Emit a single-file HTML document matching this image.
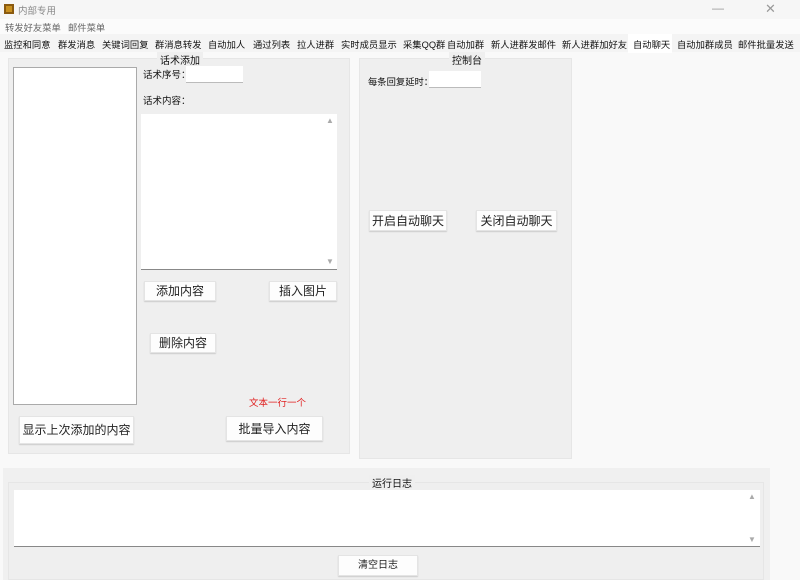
<!DOCTYPE html>
<html><head><meta charset="utf-8"><style>
*{margin:0;padding:0;box-sizing:border-box}
body{width:800px;height:580px;background:#f9f9f9;font-family:"Liberation Sans","Noto Sans CJK SC",sans-serif;font-size:10px;color:#111;position:relative;overflow:hidden}
.a{position:absolute;white-space:nowrap}
.btn{position:absolute;background:#fdfdfd;border:1px solid #e4e4e4;box-shadow:0 1px 1px #ccc;text-align:center;font-size:12px;color:#222;white-space:nowrap}
.inp{position:absolute;background:#fff;border-bottom:1px solid #bbb}
.grp{position:absolute;background:#efefef;border:1px solid #e6e6e6}
.tab{position:absolute;top:37px;font-size:9.3px;color:#111;white-space:nowrap}
</style></head><body>
<div class="a" style="left:0;top:0;width:800px;height:19px;background:#f6f6f6"></div>
<div class="a" style="left:4px;top:4px;width:10px;height:10px;background:#c89020;border:2px solid #8a5a10"></div>
<div class="a" style="left:18px;top:3px;color:#888;font-size:9.5px">内部专用</div>
<div class="a" style="left:712px;top:1px;color:#999;font-size:12px">—</div>
<div class="a" style="left:765px;top:1px;color:#999;font-size:13px">✕</div>
<div class="a" style="left:0;top:19px;width:800px;height:15px;background:#fbfbfb"></div>
<div class="a" style="left:5px;top:20px;color:#666;font-size:9.3px">转发好友菜单</div>
<div class="a" style="left:68px;top:20px;color:#666;font-size:9.3px">邮件菜单</div>
<div class="a" style="left:0;top:34px;width:800px;height:18px;background:#f4f4f4"></div>
<div class="a" style="left:628px;top:34px;width:44px;height:19px;background:#fff"></div>
<div class="tab" style="left:4px">监控和同意</div>
<div class="tab" style="left:58px">群发消息</div>
<div class="tab" style="left:102px">关键词回复</div>
<div class="tab" style="left:155px">群消息转发</div>
<div class="tab" style="left:208px">自动加人</div>
<div class="tab" style="left:253px">通过列表</div>
<div class="tab" style="left:297px">拉人进群</div>
<div class="tab" style="left:341px">实时成员显示</div>
<div class="tab" style="left:403px">采集QQ群</div>
<div class="tab" style="left:447px">自动加群</div>
<div class="tab" style="left:491px">新人进群发邮件</div>
<div class="tab" style="left:562px">新人进群加好友</div>
<div class="tab" style="left:633px">自动聊天</div>
<div class="tab" style="left:677px">自动加群成员</div>
<div class="tab" style="left:738px">邮件批量发送</div>

<div class="grp" style="left:8px;top:58px;width:342px;height:396px"></div>
<div class="a" style="left:157px;top:52px;background:#efefef;padding:0 3px;font-size:10px">话术添加</div>
<div class="a" style="left:13px;top:67px;width:124px;height:338px;background:#fff;border:1px solid #aaa"></div>
<div class="a" style="left:143px;top:67px;font-size:9.5px">话术序号：</div>
<div class="inp" style="left:186px;top:66px;width:57px;height:17px"></div>
<div class="a" style="left:143px;top:93px;font-size:9.5px">话术内容：</div>
<div class="a" style="left:141px;top:114px;width:196px;height:156px;background:#fff;border-bottom:1px solid #888"></div>
<div class="a" style="left:326px;top:116px;color:#aaa;font-size:8px">▲</div>
<div class="a" style="left:326px;top:257px;color:#aaa;font-size:8px">▼</div>
<div class="btn" style="left:144px;top:281px;width:72px;height:20px;line-height:19px">添加内容</div>
<div class="btn" style="left:269px;top:281px;width:68px;height:20px;line-height:19px">插入图片</div>
<div class="btn" style="left:150px;top:333px;width:66px;height:20px;line-height:19px">删除内容</div>
<div class="a" style="left:249px;top:395px;color:#e02020;font-size:9.5px">文本一行一个</div>
<div class="btn" style="left:226px;top:416px;width:97px;height:25px;line-height:24px">批量导入内容</div>
<div class="btn" style="left:19px;top:416px;width:115px;height:28px;line-height:27px">显示上次添加的内容</div>

<div class="grp" style="left:359px;top:58px;width:213px;height:401px"></div>
<div class="a" style="left:449px;top:52px;background:#efefef;padding:0 3px;font-size:10px">控制台</div>
<div class="a" style="left:368px;top:74px;font-size:9.3px">每条回复延时：</div>
<div class="inp" style="left:429px;top:71px;width:52px;height:17px"></div>
<div class="btn" style="left:369px;top:210px;width:78px;height:21px;line-height:20px">开启自动聊天</div>
<div class="btn" style="left:476px;top:210px;width:81px;height:21px;line-height:20px">关闭自动聊天</div>

<div class="a" style="left:3px;top:468px;width:767px;height:112px;background:#f0f0f0"></div>
<div class="a" style="left:8px;top:482px;width:756px;height:98px;border:1px solid #e6e6e6;background:#efefef"></div>
<div class="a" style="left:369px;top:475px;background:#efefef;padding:0 3px;font-size:10px">运行日志</div>
<div class="a" style="left:14px;top:490px;width:746px;height:57px;background:#fff;border-bottom:1px solid #888"></div>
<div class="a" style="left:748px;top:492px;color:#aaa;font-size:8px">▲</div>
<div class="a" style="left:748px;top:535px;color:#aaa;font-size:8px">▼</div>
<div class="btn" style="left:338px;top:555px;width:80px;height:21px;line-height:20px;font-size:10px">清空日志</div>
</body></html>
